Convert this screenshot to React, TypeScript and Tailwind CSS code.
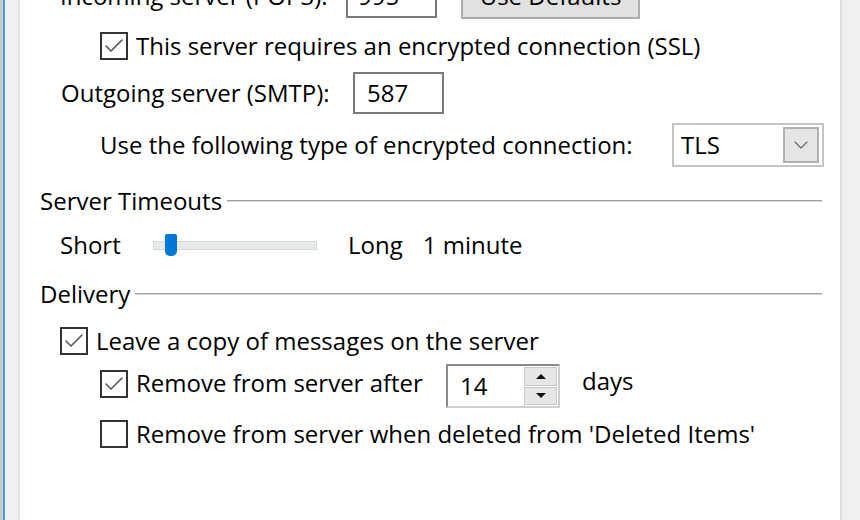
import { Check, ChevronDown } from 'lucide-react';

function CheckBox({ checked }: { checked: boolean }) {
    return (
        <div className="w-[28px] h-[28px] border-2 border-[#333333] bg-white flex items-center justify-center shrink-0">
            {checked && <Check size={24} strokeWidth={1.6} className="text-[#555555]" />}
        </div>
    );
}

function GroupTitle({ title }: { title: string }) {
    return (
        <div className="h-[30px] flex items-center pr-[18px]">
            <span className="pl-[20px] pr-[5px]">{title}</span>
            <div className="flex-1 flex flex-col">
                <div className="h-[1px] bg-[#a0a0a0]" />
                <div className="h-[1px] bg-[#d6d6d6]" />
            </div>
        </div>
    );
}

export default function App() {
    return (
        <div
            className="w-[860px] h-[520px] overflow-hidden flex bg-[#f0f0f0] text-[24px] text-black"
            style={{ fontFamily: '"Open Sans", "Noto Sans", sans-serif' }}
        >
            {/* left edge of window behind */}
            <div className="w-[20px] h-full flex shrink-0">
                <div className="w-[3px] bg-[#c8c8c8]" />
                <div className="w-[2px] bg-[#4a9ae0]" />
                <div className="flex-1 bg-[#f0f0f0]" />
                <div className="w-[2px] bg-[#e2e2e2]" />
            </div>

            <div className="w-[820px] h-full bg-white flex flex-col">
                {/* incoming server row, clipped at top */}
                <div className="-mt-[27px] h-[46px] flex items-center">
                    <span className="pl-[40px] w-[326px] whitespace-nowrap">Incoming server (POP3):</span>
                    <div className="w-[91px] h-[44px] border-2 border-[#7a7a7a] flex items-center px-[10px]">995</div>
                    <button className="ml-[24px] w-[179px] h-[46px] bg-[#e1e1e1] border-2 border-[#adadad]">Use Defaults</button>
                </div>

                <div className="h-[53px] flex items-center pl-[80px] gap-[8px]">
                    <CheckBox checked />
                    <span>This server requires an encrypted connection (SSL)</span>
                </div>

                <div className="h-[42px] flex items-center">
                    <span className="pl-[41px] w-[333px]">Outgoing server (SMTP):</span>
                    <div className="w-[91px] h-[42px] border-2 border-[#7a7a7a] flex items-center px-[12px]">587</div>
                </div>

                <div className="mt-[9px] h-[44px] flex items-center">
                    <span className="pl-[80px] w-[652px]">Use the following type of encrypted connection:</span>
                    <div className="w-[152px] h-[44px] border-2 border-[#c4c4c4] flex items-center justify-between pl-[7px] pr-[3px]">
                        <span>TLS</span>
                        <div className="w-[36px] h-[36px] bg-[#e5e5e5] border-2 border-[#b0b0b0] flex items-center justify-center">
                            <ChevronDown size={24} strokeWidth={1.1} className="text-[#666666]" />
                        </div>
                    </div>
                </div>

                <div className="mt-[19px]">
                    <GroupTitle title="Server Timeouts" />
                </div>

                <div className="mt-[9px] h-[40px] flex items-center">
                    <span className="pl-[40px] w-[133px]">Short</span>
                    <div className="relative w-[164px] h-[9px] bg-[#e7eaea] border border-[#d6d6d6]">
                        <div className="absolute left-[11px] -top-[8px] w-[12px] h-[22px] bg-[#0078d7] rounded-b-[5px] rounded-t-[2px]" />
                    </div>
                    <span className="ml-[31px]">Long</span>
                    <span className="ml-[20px]">1 minute</span>
                </div>

                <div className="mt-[14px]">
                    <GroupTitle title="Delivery" />
                </div>

                <div className="mt-[18px] h-[28px] flex items-center pl-[40px] gap-[8px]">
                    <CheckBox checked />
                    <span>Leave a copy of messages on the server</span>
                </div>

                <div className="mt-[9px] h-[44px] flex items-start pl-[80px]">
                    <div className="mt-[3px] flex items-center gap-[8px] w-[346px]">
                        <CheckBox checked />
                        <span className="-mt-[2px]">Remove from server after</span>
                    </div>
                    <div className="w-[114px] h-[44px] flex border-2 border-t-[#8a8a8a] border-l-[#8a8a8a] border-r-[#cfcfcf] border-b-[#cfcfcf]">
                        <div className="flex-1 flex items-center pl-[12px]">14</div>
                        <div className="w-[35px] flex flex-col p-[1px] gap-[1px]">
                            <div className="flex-1 bg-[#e6e6e6] border border-[#c8c8c8] flex items-center justify-center">
                                <div className="w-0 h-0 border-l-[5px] border-r-[5px] border-b-[5px] border-l-transparent border-r-transparent border-b-[#111111]" />
                            </div>
                            <div className="flex-1 bg-[#e6e6e6] border border-[#c8c8c8] flex items-center justify-center">
                                <div className="w-0 h-0 border-l-[5px] border-r-[5px] border-t-[5px] border-l-transparent border-r-transparent border-t-[#111111]" />
                            </div>
                        </div>
                    </div>
                    <span className="ml-[22px] -mt-[1px]">days</span>
                </div>

                <div className="mt-[12px] h-[28px] flex items-center pl-[80px] gap-[8px]">
                    <CheckBox checked={false} />
                    <span>Remove from server when deleted from 'Deleted Items'</span>
                </div>
            </div>

            <div className="w-[2px] h-full bg-[#dcdcdc]" />
            <div className="flex-1 h-full bg-[#f0f0f0]" />
        </div>
    );
}
